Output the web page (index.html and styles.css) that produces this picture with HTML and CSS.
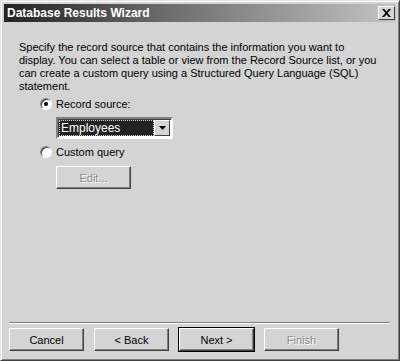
FILE: index.html
```html
<!DOCTYPE html>
<html lang="en">
<head>
  <meta charset="UTF-8">
  <title>Database Results Wizard</title>
  <link rel="stylesheet" href="styles.css">
</head>
<body>
  <div class="window">
    <div class="titlebar">
      <span class="title">Database Results Wizard</span>
      <span class="close">
        <svg width="9" height="8" viewBox="0 0 9 8"><path d="M0 0h2.2l2.3 2.6L6.8 0H9L5.6 4 9 8H6.8L4.5 5.4 2.2 8H0l3.4-4z" fill="#000"/></svg>
      </span>
    </div>

    <div class="content">
      <p class="intro">Specify the record source that contains the information you want to<br>
        display. You can select a table or view from the Record Source list, or you<br>
        can create a custom query using a Structured Query Language (SQL)<br>
        statement.</p>

      <label class="option">
        <span class="radio checked"></span>
        Record source:
      </label>
      <div class="combo">
        <span class="combo-value"><span class="focus">Employees</span></span>
        <span class="combo-btn">
          <svg width="7" height="4" viewBox="0 0 7 4"><path d="M0 0h7L3.5 4z" fill="#000"/></svg>
        </span>
      </div>

      <label class="option">
        <span class="radio"></span>
        Custom query
      </label>
      <button class="btn small" disabled>Edit...</button>
    </div>

    <div class="footer">
      <button class="btn">Cancel</button>
      <button class="btn">&lt; Back</button>
      <button class="btn default">Next &gt;</button>
      <button class="btn" disabled>Finish</button>
    </div>
  </div>
</body>
</html>
```

FILE: styles.css
```css
body {
  margin: 0;
  background: #d4d4d4;
  font-family: "Liberation Sans", Arial, sans-serif;
  font-size: 11px;
  color: #000;
}
.window {
  width: 400px;
  height: 361px;
  box-sizing: border-box;
  background: #d4d4d4;
  border-top: 1px solid #e4e4e4;
  border-left: 1px solid #e4e4e4;
  border-right: 1px solid #404040;
  border-bottom: 1px solid #404040;
  box-shadow: inset 1px 1px 0 #fff, inset -1px -1px 0 #808080;
  padding: 3px 3px 0 3px;
  display: flex;
  flex-direction: column;
}
.titlebar {
  height: 18px;
  display: flex;
  align-items: center;
  justify-content: space-between;
  padding: 0 1px 0 3px;
  background: linear-gradient(to right, #222, #6a6a6a 40%, #c4c4c4);
}
.title {
  color: #fff;
  font-weight: bold;
  font-size: 12px;
}
.close {
  width: 17px;
  height: 14px;
  box-sizing: border-box;
  background: #d4d4d4;
  border-top: 1px solid #fff;
  border-left: 1px solid #fff;
  border-right: 1px solid #404040;
  border-bottom: 1px solid #404040;
  display: flex;
  align-items: center;
  justify-content: center;
}
.content {
  flex: 1;
  padding: 19px 10px 0 15px;
}
.intro {
  margin: 0 0 3px;
  line-height: 13px;
  white-space: nowrap;
}
.option {
  display: flex;
  align-items: center;
  gap: 4px;
  margin-left: 21px;
  height: 16px;
}
.radio {
  width: 12px;
  height: 12px;
  box-sizing: border-box;
  border-radius: 50%;
  background: #fff;
  border: 1px solid;
  border-color: #808080 #fff #fff #808080;
  box-shadow: inset 1px 1px 0 #404040;
  position: relative;
}
.radio.checked::after {
  content: "";
  position: absolute;
  left: 3px;
  top: 3px;
  width: 4px;
  height: 4px;
  border-radius: 50%;
  background: #000;
}
.combo {
  margin: 5px 0 5px 37px;
  width: 117px;
  height: 22px;
  box-sizing: border-box;
  display: flex;
  background: #fff;
  border: 2px solid;
  border-color: #808080 #fff #fff #808080;
  box-shadow: inset 1px 1px 0 #404040;
  padding: 1px;
}
.combo-value {
  flex: 1;
  background: #222;
  color: #fff;
  display: flex;
  align-items: center;
  padding: 0 2px;
  outline: 1px dotted #d4d4d4;
  outline-offset: -1px;
}
.focus {
  font-size: 12px;
}
.combo-btn {
  width: 16px;
  box-sizing: border-box;
  background: #d4d4d4;
  border-top: 1px solid #fff;
  border-left: 1px solid #fff;
  border-right: 1px solid #404040;
  border-bottom: 1px solid #404040;
  display: flex;
  align-items: center;
  justify-content: center;
}
.btn {
  width: 75px;
  height: 23px;
  font: inherit;
  background: #d4d4d4;
  color: #000;
  border: 1px solid;
  border-color: #fff #404040 #404040 #fff;
  box-shadow: inset -1px -1px 0 #808080;
  padding: 0;
}
.btn:disabled {
  color: #8c8c8c;
  text-shadow: 1px 1px 0 #fff;
}
.btn.small {
  margin: 6px 0 0 37px;
}
.btn.default {
  outline: 1px solid #000;
  outline-offset: 0;
}
.footer {
  margin: 0 6px 9px 5px;
  border-top: 1px solid #808080;
  box-shadow: inset 0 1px 0 #fff;
  padding-top: 5px;
  display: flex;
  gap: 10px;
}
```
